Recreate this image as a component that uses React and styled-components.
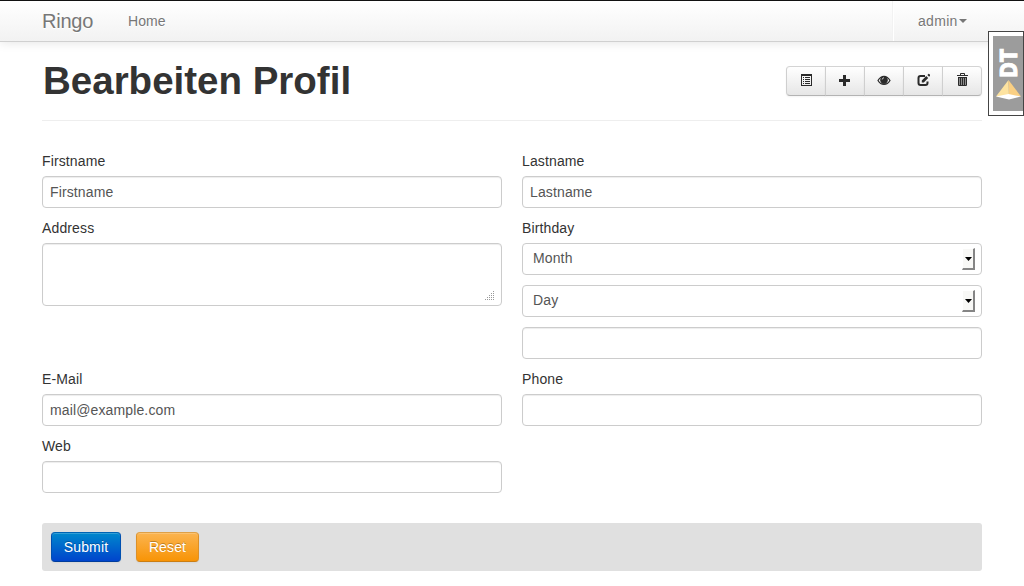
import React from "react";
import styled, { createGlobalStyle, css } from "styled-components";

const Global = createGlobalStyle`
  *, *::before, *::after { box-sizing: border-box; }
  html, body { margin: 0; height: 586px; overflow: hidden; }
  body {
    background: #fff;
    color: #333;
    font: 14px/20px "Liberation Sans", Arial, sans-serif;
  }
  button, input, textarea { font: inherit; letter-spacing: inherit; }
`;

const Page = styled.div`
  height: 586px;
  overflow: hidden;
  border-top: 1px solid #111;
`;

const Navbar = styled.nav`
  height: 41px;
  background: linear-gradient(to bottom, #ffffff, #f2f2f2);
  border-bottom: 1px solid #d0d0d0;
  box-shadow: 0 1px 10px rgba(0, 0, 0, 0.1);
`;

const Container = styled.div`
  width: 940px;
  margin: 0 42px;
`;

const NavInner = styled(Container)`
  display: flex;
  height: 40px;
  color: #777;
  text-shadow: 0 1px 0 #fff;
`;

const Brand = styled.a`
  padding: 10px 20px 10px 0;
  font-size: 20px;
  letter-spacing: -0.25px;
`;

const NavLink = styled.a`
  padding: 10px 15px;
  letter-spacing: 0.1px;
`;

const UserMenu = styled.a`
  display: flex;
  align-items: center;
  width: 90px;
  margin-left: auto;
  padding: 0 15px 0 25px;
  letter-spacing: 0.3px;
  border-left: 1px solid #f2f2f2;
  box-shadow: inset 1px 0 0 #fff;
`;

const Caret = styled.span`
  margin-left: auto;
  border: 4px solid transparent;
  border-top-color: #777;
  border-bottom: 0;
`;

const PageHeader = styled.header`
  display: flex;
  justify-content: space-between;
  align-items: flex-start;
  height: 79px;
  padding-top: 19px;
  border-bottom: 1px solid #eee;
`;

const Title = styled.h1`
  margin: 0;
  padding-left: 1px;
  font-size: 38.5px;
  line-height: 40px;
  font-weight: bold;
`;

const ButtonGroup = styled.div`
  display: flex;
  margin-top: 5px;
`;

const ToolButton = styled.button`
  display: flex;
  align-items: center;
  justify-content: center;
  width: 40px;
  height: 30px;
  padding: 0 0 2px;
  color: #2b2b2b;
  background: linear-gradient(to bottom, #ffffff, #e6e6e6);
  border: 1px solid #ccc;
  border-color: #d4d4d4 #cfcfcf #b3b3b3;
  box-shadow: inset 0 1px 0 rgba(255, 255, 255, 0.2), 0 1px 2px rgba(0, 0, 0, 0.05);
  & + & { margin-left: -1px; }
  &:first-child { border-radius: 4px 0 0 4px; }
  &:last-child { border-radius: 0 4px 4px 0; }
`;

const Form = styled.form`
  display: flex;
  flex-direction: column;
  padding-top: 30px;
  letter-spacing: 0.13px;
`;

const Row = styled.div`
  display: grid;
  grid-template-columns: 460px 460px;
  column-gap: 20px;
  align-items: start;
`;

const Field = styled.div`
  display: flex;
  flex-direction: column;
  padding-bottom: 10px;
`;

const Label = styled.label`
  margin-bottom: 5px;
`;

const control = css`
  width: 100%;
  border: 1px solid #ccc;
  border-radius: 4px;
  background: #fff;
  color: #555;
  outline: 0;
`;

const Input = styled.input`
  ${control}
  height: 32px;
  padding: 4px 7px;
  box-shadow: inset 0 1px 1px rgba(0, 0, 0, 0.075);
`;

const AreaWrap = styled.div`
  position: relative;
  height: 63px;
`;

const TextArea = styled.textarea`
  ${control}
  display: block;
  height: 63px;
  padding: 4px 7px;
  resize: none;
  box-shadow: inset 0 1px 1px rgba(0, 0, 0, 0.075);
`;

const Grip = styled.svg`
  position: absolute;
  right: 7px;
  bottom: 5px;
`;

const SelectStack = styled.div`
  display: grid;
  row-gap: 10px;
`;

const SelectBox = styled.div`
  ${control}
  display: flex;
  align-items: center;
  justify-content: space-between;
  height: 32px;
  padding: 0 6px 2px 10px;
`;

const Arrow = styled.span`
  display: flex;
  align-items: center;
  justify-content: center;
  width: 13px;
  height: 22px;
  margin-top: 2px;
  background: #f8f8f6;
  border: solid #858585;
  border-width: 0 2px 2px 0;
  border-top: 1px solid #fff;
  border-left: 1px solid #fff;
`;

const Actions = styled.div`
  display: flex;
  gap: 15px;
  height: 48px;
  margin-top: 20px;
  padding: 9px;
  background: #e0e0e0;
  border-radius: 3px;
`;

const ActionButton = styled.button`
  width: ${(p) => (p.$primary ? 70 : 63)}px;
  height: 30px;
  padding: 0;
  color: #fff;
  border: 1px solid;
  border-radius: 4px;
  text-shadow: 0 -1px 0 rgba(0, 0, 0, 0.25);
  box-shadow: inset 0 1px 0 rgba(255, 255, 255, 0.2), 0 1px 2px rgba(0, 0, 0, 0.05);
  ${(p) =>
    p.$primary
      ? css`
          background: linear-gradient(to bottom, #0088cc, #0044cc);
          border-color: #0064b4 #0050b0 #003c9c;
        `
      : css`
          background: linear-gradient(to bottom, #fbb450, #f89406);
          border-color: #dea047 #dc9028 #cb7e13;
        `}
`;

const DebugTab = styled.aside`
  position: absolute;
  top: 31px;
  left: 988px;
  width: 36px;
  height: 85px;
  padding: 4px 0 4px 4px;
  background: #fff;
  border: 1px solid #444;
`;

const DebugFace = styled.svg`
  display: block;
  overflow: visible;
  background: #9c9c9c;
`;

const Icon = ({ children, w = 14 }) => (
  <svg width={w} height="14" viewBox={`0 0 ${w} 14`} fill="currentColor">
    {children}
  </svg>
);

const ListIcon = () => (
  <Icon w={12}>
    <path d="M1 1h11v12H1z M2 3v9h9V3z" fillRule="evenodd" />
    <path d="M3 4h1v1H3zM5 4h5v1H5zM3 6h1v1H3zM5 6h5v1H5zM3 8h1v1H3zM5 8h5v1H5zM3 10h1v1H3zM5 10h5v1H5z" />
  </Icon>
);

const PlusIcon = () => (
  <Icon w={12}>
    <path d="M4 2h3v4h4v3H7v4H4V9H0V6h4z" />
  </Icon>
);

const EyeIcon = () => (
  <Icon>
    <path
      fillRule="evenodd"
      d="M.3 7.500Q3 2.700 7 2.700t6.700 4.800Q11 12 7 12T.3 7.500zM1.700 7.500Q3.700 10.900 7 10.900t5.300-3.400Q11.400 5.700 9.800 4.800a3.700 3.700 0 1 1-5.600 0Q2.600 5.700 1.700 7.500z"
    />
    <path d="M5.200 6.500A2 2 0 0 1 7 4.700" fill="none" stroke="#eee" strokeWidth=".8" />
  </Icon>
);

const EditIcon = () => (
  <Icon w={13}>
    <path
      d="M8 3H3.500Q1.500 3 1.500 5v5q0 2 2 2h5q2 0 2-2V8.500"
      fill="none"
      stroke="currentColor"
      strokeWidth="2"
    />
    <path d="M4.800 9.500v-2l4.400-4.400 2 2-4.400 4.400zM10.400 2l1-1q.4-.3.800 0l.9.900q.3.400 0 .8l-1 1z" />
  </Icon>
);

const TrashIcon = () => (
  <Icon w={12}>
    <path
      fillRule="evenodd"
      d="M4 2V.8Q4 0 5 0h3q1 0 1 .8V2h3v1H1V2zM5 1v1h3V1zM2 4h9v8q0 1-1 1H3q-1 0-1-1z"
    />
    <path d="M3 5h1v7H3zM5 5h1v7H5zM7 5h1v7H7zM9 5h1v7H9z" fill="#8c8c8c" />
  </Icon>
);

const tools = [
  ["list", ListIcon],
  ["new", PlusIcon],
  ["view", EyeIcon],
  ["edit", EditIcon],
  ["delete", TrashIcon],
];

const TextField = ({ label, value = "" }) => (
  <Field>
    <Label>{label}</Label>
    <Input defaultValue={value} />
  </Field>
);

const Select = ({ children }) => (
  <SelectBox>
    {children}
    <Arrow>
      <svg width="7" height="4" viewBox="0 0 7 4">
        <path d="M0 0h7L3.500 4z" fill="#000" />
      </svg>
    </Arrow>
  </SelectBox>
);

export default function App() {
  return (
    <Page>
      <Global />
      <Navbar>
        <NavInner>
          <Brand>Ringo</Brand>
          <NavLink>Home</NavLink>
          <UserMenu>
            admin
            <Caret />
          </UserMenu>
        </NavInner>
      </Navbar>
      <Container>
        <PageHeader>
          <Title>Bearbeiten Profil</Title>
          <ButtonGroup>
            {tools.map(([name, Glyph]) => (
              <ToolButton key={name} type="button">
                <Glyph />
              </ToolButton>
            ))}
          </ButtonGroup>
        </PageHeader>
        <Form>
          <Row>
            <TextField label="Firstname" value="Firstname" />
            <TextField label="Lastname" value="Lastname" />
          </Row>
          <Row>
            <Field>
              <Label>Address</Label>
              <AreaWrap>
                <TextArea />
                <Grip width="10" height="10" viewBox="0 0 10 10" fill="#999">
                  <path d="M8 0h1v1H8zM6 2h1v1H6zM8 2h1v1H8zM4 4h1v1H4zM6 4h1v1H6zM8 4h1v1H8zM2 6h1v1H2zM4 6h1v1H4zM6 6h1v1H6zM8 6h1v1H8zM0 8h1v1H0zM2 8h1v1H2zM4 8h1v1H4zM6 8h1v1H6zM8 8h1v1H8z" />
                </Grip>
              </AreaWrap>
            </Field>
            <Field>
              <Label>Birthday</Label>
              <SelectStack>
                <Select>Month</Select>
                <Select>Day</Select>
                <Input />
              </SelectStack>
            </Field>
          </Row>
          <Row>
            <TextField label="E-Mail" value="mail@example.com" />
            <TextField label="Phone" />
          </Row>
          <Row>
            <TextField label="Web" />
          </Row>
          <Actions>
            <ActionButton type="button" $primary>Submit</ActionButton>
            <ActionButton type="button">Reset</ActionButton>
          </Actions>
        </Form>
      </Container>
      <DebugTab>
        <DebugFace width="30" height="75" viewBox="0 0 30 75">
          <text
            transform="translate(23.500 42) rotate(-90)"
            fontFamily="DejaVu Sans"
            fontWeight="bold"
            fontSize="23.500"
            fill="#fff"
            stroke="#fff"
            strokeWidth="0.900"
            textLength="29"
            lengthAdjust="spacingAndGlyphs"
          >
            DT
          </text>
          <path d="M3 60.500 15.500 44 16 62z" fill="#fde3a0" />
          <path d="M15.500 44 28 60.500 16 59z" fill="#f9cf83" />
          <path d="M3 60.500 15.500 58 28 60.500 16 63.500z" fill="#fff" />
        </DebugFace>
      </DebugTab>
    </Page>
  );
}
